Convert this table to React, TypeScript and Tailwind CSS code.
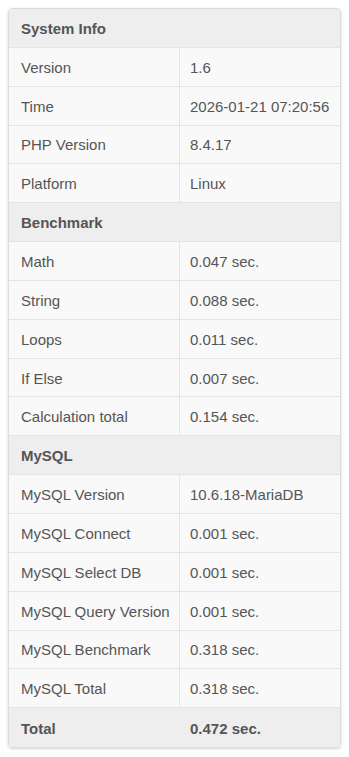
import React from "react";

type Row = { k: string; v: string; head?: boolean };

const rows: Row[] = [
  { k: "System Info", v: "", head: true },
  { k: "Version", v: "1.6" },
  { k: "Time", v: "2026-01-21 07:20:56" },
  { k: "PHP Version", v: "8.4.17" },
  { k: "Platform", v: "Linux" },
  { k: "Benchmark", v: "", head: true },
  { k: "Math", v: "0.047 sec." },
  { k: "String", v: "0.088 sec." },
  { k: "Loops", v: "0.011 sec." },
  { k: "If Else", v: "0.007 sec." },
  { k: "Calculation total", v: "0.154 sec." },
  { k: "MySQL", v: "", head: true },
  { k: "MySQL Version", v: "10.6.18-MariaDB" },
  { k: "MySQL Connect", v: "0.001 sec." },
  { k: "MySQL Select DB", v: "0.001 sec." },
  { k: "MySQL Query Version", v: "0.001 sec." },
  { k: "MySQL Benchmark", v: "0.318 sec." },
  { k: "MySQL Total", v: "0.318 sec." },
];

export default function App() {
  return (
    <div className="bg-white p-2" style={{ fontFamily: '"Liberation Sans", Arial, sans-serif' }}>
      <div className="overflow-hidden rounded border border-[#dcdcdc] text-[15px] leading-[20px] text-[#555] shadow-[0_1px_3px_rgba(0,0,0,0.18)]">
        {rows.map((r, i) =>
          r.head ? (
            <div
              key={i}
              className="flex h-[38.85px] items-center border-b border-[#e4e4e4] bg-[#eeeeee] px-3 pt-[2px] font-bold"
            >
              {r.k}
            </div>
          ) : (
            <div key={i} className="flex h-[38.85px] border-b border-[#e4e4e4] bg-[#f9f9f9]">
              <div className="flex w-[171px] items-center border-r border-[#e4e4e4] pl-3 pt-[2px]">{r.k}</div>
              <div className="flex flex-1 items-center pl-[10px] pt-[2px]">{r.v}</div>
            </div>
          )
        )}
        <div className="flex h-[38.85px] items-center bg-[#eeeeee] pt-[2px] font-bold">
          <div className="w-[171px] pl-3">Total</div>
          <div className="flex-1 pl-[10px]">0.472 sec.</div>
        </div>
      </div>
    </div>
  );
}
